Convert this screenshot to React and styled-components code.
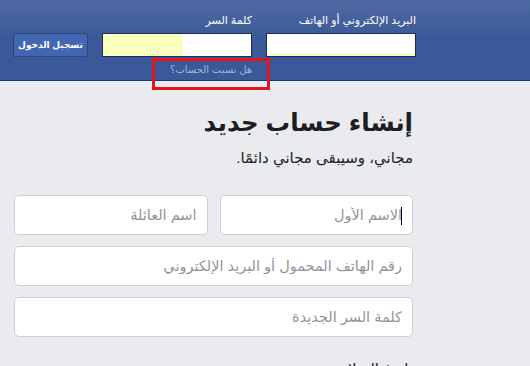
import React from "react";
import styled, { createGlobalStyle } from "styled-components";

const Global = createGlobalStyle`
  html, body { margin: 0; padding: 0; background: #e9ebee; overflow: hidden; }
  body { font-family: "Liberation Sans", "DejaVu Sans", sans-serif; }
  * { box-sizing: border-box; }
`;

const Page = styled.div`
  position: relative;
  width: 530px;
  height: 366px;
  overflow: hidden;
  direction: rtl;
  background: #e9ebee;
`;

const Header = styled.header`
  height: 81px;
  background: linear-gradient(#4e69a2, #3b5998 50%);
  border-bottom: 1px solid #133783;
  padding: 14px 114px 0 0;
`;

const LoginGrid = styled.div`
  display: grid;
  grid-template-columns: 150px 150px 75px;
  column-gap: 14px;
  grid-template-rows: 19px 24px auto;
`;

const Label = styled.label`
  font-size: 11px;
  line-height: 13px;
  color: #fff;
  align-self: start;
  white-space: nowrap;
`;

const LoginInput = styled.input`
  width: 150px;
  height: 24px;
  border: 1px solid #1d2a5b;
  background: ${(p) => (p.$autofill ? "linear-gradient(to left, #fff 0, #fff 68px, #faffbd 68px)" : "#fff")};
  box-shadow: ${(p) => (p.$autofill ? "none" : "inset -1px -2px 0 #faffbd")};
  outline: none;
  padding: 0 4px;
  font-size: 11px;
`;

const LoginButton = styled.button`
  width: 75px;
  height: 24px;
  border: 1px solid #29487d;
  border-radius: 2px;
  background: #4267b2;
  color: #fff;
  font-family: "Liberation Sans", "DejaVu Sans", sans-serif;
  font-size: 9px;
  font-weight: bold;
  white-space: nowrap;
  padding: 0;
  cursor: pointer;
`;

const Forgot = styled.a`
  grid-column: 2;
  grid-row: 3;
  margin-top: 6px;
  font-size: 10px;
  line-height: 13px;
  color: #9cb4d8;
  text-decoration: none;
  white-space: nowrap;
`;

const Main = styled.main`
  padding: 25px 117px 0 14px;
`;

const Title = styled.h1`
  margin: 0;
  font-size: 24.5px;
  line-height: 34px;
  font-weight: bold;
  color: #1c1e21;
`;

const Subtitle = styled.p`
  margin: 8px 0 0;
  font-size: 15px;
  line-height: 20px;
  color: #1c1e21;
`;

const Form = styled.div`
  margin-top: 27px;
  display: flex;
  flex-direction: column;
  gap: 11px;
`;

const Row = styled.div`
  display: flex;
  gap: 12px;
`;

const Field = styled.div`
  position: relative;
  flex: 1;
  display: flex;
`;

const TextInput = styled.input`
  flex: 1;
  width: 100%;
  height: 40px;
  border: 1px solid #ccd0d5;
  border-radius: 5px;
  background: #fff;
  padding: 0 10px;
  font-family: "Liberation Sans", "DejaVu Sans", sans-serif;
  font-size: 14.5px;
  color: #1c1e21;
  outline: none;
  &::placeholder { color: #90949c; }
`;

const Caret = styled.span`
  position: absolute;
  right: 11px;
  top: 12px;
  width: 1px;
  height: 18px;
  background: #000;
`;

const Birthday = styled.div`
  margin-top: 22px;
  font-size: 15px;
  line-height: 20px;
  color: #1c1e21;
`;

const Highlight = styled.div`
  position: absolute;
  left: 152px;
  top: 58px;
  width: 118px;
  height: 32px;
  border: 3px solid #e3141d;
  pointer-events: none;
`;

export default function App() {
  return (
    <Page>
      <Global />
      <Header>
        <LoginGrid>
          <Label>البريد الإلكتروني أو الهاتف</Label>
          <Label>كلمة السر</Label>
          <span />
          <LoginInput type="text" />
          <LoginInput type="password" $autofill />
          <LoginButton>تسجيل الدخول</LoginButton>
          <Forgot href="#">هل نسيت الحساب؟</Forgot>
        </LoginGrid>
      </Header>
      <Main>
        <Title>إنشاء حساب جديد</Title>
        <Subtitle>مجاني، وسيبقى مجاني دائمًا.</Subtitle>
        <Form>
          <Row>
            <Field>
              <TextInput placeholder="الاسم الأول" />
              <Caret />
            </Field>
            <Field>
              <TextInput placeholder="اسم العائلة" />
            </Field>
          </Row>
          <Field>
            <TextInput placeholder="رقم الهاتف المحمول أو البريد الإلكتروني" />
          </Field>
          <Field>
            <TextInput placeholder="كلمة السر الجديدة" />
          </Field>
        </Form>
        <Birthday>تاريخ الميلاد</Birthday>
      </Main>
      <Highlight />
    </Page>
  );
}
